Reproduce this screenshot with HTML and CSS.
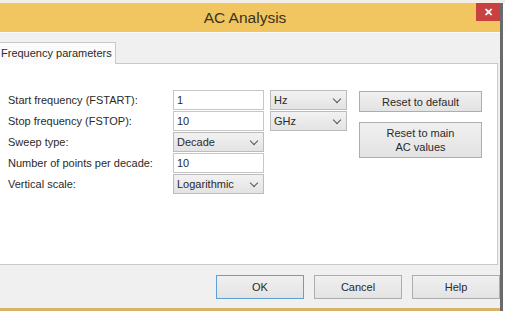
FILE: index.html
```html
<!DOCTYPE html>
<html lang="en">
<head>
    <meta charset="UTF-8">
    <meta name="viewport" content="width=device-width, initial-scale=1.0">
    <title>AC Analysis</title>
    <link rel="stylesheet" href="styles.css">
</head>
<body>
    <div class="topstrip"></div>
    <div class="window">
        <div class="titlebar">
            <span class="title">AC Analysis</span>
            <span class="close">&#x2715;</span>
        </div>
        <div class="tabs">
            <div class="tab">Frequency parameters</div>
        </div>
        <div class="panel">
            <div class="form">
                <div class="labels">
                    <div class="lbl">Start frequency (FSTART):</div>
                    <div class="lbl">Stop frequency (FSTOP):</div>
                    <div class="lbl">Sweep type:</div>
                    <div class="lbl">Number of points per decade:</div>
                    <div class="lbl">Vertical scale:</div>
                </div>
                <div class="fields">
                    <div class="field">1</div>
                    <div class="field">10</div>
                    <div class="field combo">Decade<span class="arrow"></span></div>
                    <div class="field">10</div>
                    <div class="field combo">Logarithmic<span class="arrow"></span></div>
                </div>
                <div class="units">
                    <div class="field combo">Hz<span class="arrow"></span></div>
                    <div class="field combo">GHz<span class="arrow"></span></div>
                </div>
                <div class="resets">
                    <button class="btn">Reset to default</button>
                    <button class="btn tall">Reset to main<br>AC values</button>
                </div>
            </div>
        </div>
        <div class="footer">
            <button class="btn foot ok">OK</button>
            <button class="btn foot">Cancel</button>
            <button class="btn foot">Help</button>
        </div>
    </div>
</body>
</html>
```

FILE: styles.css
```css
body { margin: 0; background: #fff; font-family: "Liberation Sans", Arial, sans-serif; font-size: 11px; color: #2a2a2a; width: 505px; height: 311px; overflow: hidden; }
.topstrip { height: 3px; background: #f4efe6; }
.window { width: 500px; border-right: 3px solid #6a6a6a; background: #f0f0f0; }
.titlebar { height: 29px; background: #f1c55f; display: flex; align-items: center; justify-content: center; position: relative; }
.title { font-size: 15.5px; color: #3a3320; padding-right: 10px; }
.close { position: absolute; right: 0; top: 0; width: 24px; height: 18px; background: #c8403f; color: #fff; font-size: 11px; font-weight: bold; display: flex; align-items: center; justify-content: center; }
.tabs { height: 30px; border-top: 1px solid #fafafa; display: flex; align-items: flex-end; }
.tab { height: 21px; width: 114px; background: #fbfbfb; border: 1px solid #c9c9c9; border-bottom: none; border-left: none; margin-bottom: -1px; line-height: 20px; padding-left: 1px; overflow: hidden; white-space: nowrap; }
.panel { height: 200px; background: #fff; border: 1px solid #c9c9c9; border-left: none; margin-right: 2px; }
.form { display: flex; padding-top: 26px; }
.labels { width: 165px; padding-left: 8px; }
.lbl { height: 21px; line-height: 21px; }
.fields { width: 91px; display: flex; flex-direction: column; gap: 1px; }
.field { height: 18px; border: 1px solid #c6c6c6; background: #fff; padding-left: 3px; line-height: 18px; position: relative; }
.combo { background: linear-gradient(#f2f2f2, #e3e3e3); border-color: #bcbcbc; }
.arrow { position: absolute; right: 6px; top: 5px; width: 5px; height: 5px; border-right: 1.5px solid #555; border-bottom: 1.5px solid #555; transform: rotate(45deg); }
.units { width: 77px; margin-left: 6px; display: flex; flex-direction: column; gap: 1px; }
.resets { margin-left: 12px; width: 123px; display: flex; flex-direction: column; gap: 10px; padding-top: 1px; }
.btn { font-family: inherit; font-size: 11px; color: #2a2a2a; background: linear-gradient(#f0f0f0, #e3e3e3); border: 1px solid #adadad; height: 21px; padding: 0; }
.tall { height: 36px; line-height: 14px; }
.footer { height: 43px; display: flex; justify-content: flex-end; align-items: center; gap: 10px; border-bottom: 3px solid #d6b46a; }
.foot { width: 88px; height: 24px; margin-top: 1px; }
.ok { border-color: #5e9fd8; }
```
